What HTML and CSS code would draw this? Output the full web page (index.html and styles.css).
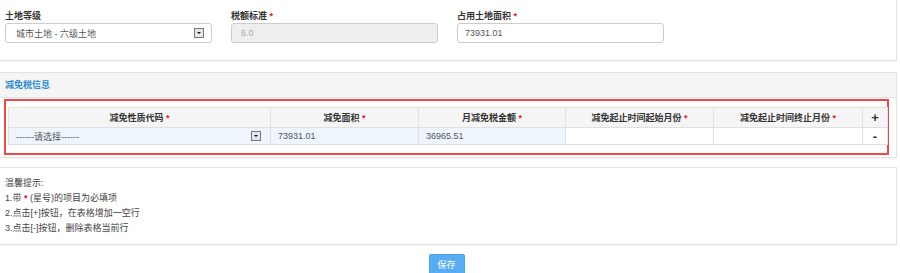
FILE: index.html
```html
<!DOCTYPE html>
<html lang="zh-CN">
<head>
<meta charset="UTF-8" />
<title>减免税信息</title>
<link rel="stylesheet" href="styles.css">
</head>
<body>

<div class="panel panel-top">
  <div class="form-row">
    <div class="field">
      <label>土地等级</label>
      <div class="select">
        <span>城市土地 - 六级土地</span>
        <span class="arrow"></span>
      </div>
    </div>
    <div class="field">
      <label>税额标准 <i class="req">*</i></label>
      <div class="input disabled">6.0</div>
    </div>
    <div class="field">
      <label>占用土地面积 <i class="req">*</i></label>
      <div class="input">73931.01</div>
    </div>
  </div>
</div>

<div class="panel panel-relief">
  <div class="panel-heading">减免税信息</div>
  <div class="panel-body">
    <div class="highlight">
      <table class="grid">
        <colgroup>
          <col style="width:262px"><col style="width:148px"><col style="width:147px">
          <col style="width:148px"><col style="width:149px"><col>
        </colgroup>
        <thead>
          <tr>
            <th>减免性质代码 <i class="req">*</i></th>
            <th>减免面积 <i class="req">*</i></th>
            <th>月减免税金额 <i class="req">*</i></th>
            <th>减免起止时间起始月份 <i class="req">*</i></th>
            <th>减免起止时间终止月份 <i class="req">*</i></th>
            <th class="op">+</th>
          </tr>
        </thead>
        <tbody>
          <tr>
            <td class="fill">
              <div class="cell-select">
                <span>------请选择------</span>
                <span class="arrow"></span>
              </div>
            </td>
            <td class="fill">73931.01</td>
            <td class="fill">36965.51</td>
            <td></td>
            <td></td>
            <td class="op">-</td>
          </tr>
        </tbody>
      </table>
    </div>
  </div>
</div>

<div class="panel panel-tips">
  <p>温馨提示:</p>
  <p>1.带 <i class="req">*</i> (星号)的项目为必填项</p>
  <p>2.点击[+]按钮，在表格增加一空行</p>
  <p>3.点击[-]按钮，删除表格当前行</p>
</div>

<div class="actions">
  <button class="btn-save">保存</button>
</div>

</body>
</html>
```

FILE: styles.css
```css
body {
  margin: 0;
  background: #fff;
  color: #333;
  font-family: "Liberation Sans", "Noto Sans CJK SC", sans-serif;
  font-size: 9px;
}
.req {
  color: #e4151b;
  font-style: normal;
  font-weight: bold;
}
.panel {
  margin-right: 3px;
  border: 1px solid #e3e3e3;
  border-left: 0;
  background: #fff;
  box-shadow: 0 1px 1px rgba(0, 0, 0, 0.04);
}
.panel-top {
  border-top: 0;
  padding: 10px 0 17px 5px;
}
.form-row {
  display: flex;
  gap: 19px;
}
.field {
  width: 207px;
}
.field label {
  display: block;
  height: 12px;
  line-height: 12px;
  margin-bottom: 1px;
  font-weight: bold;
  color: #333;
}
.select, .input {
  box-sizing: border-box;
  height: 20px;
  border: 1px solid #ccc;
  border-radius: 3px;
  display: flex;
  align-items: center;
  color: #555;
}
.select {
  padding: 0 7px 0 10px;
  justify-content: space-between;
}
.input {
  padding-left: 7px;
}
.input.disabled {
  background: #eee;
  color: #aaa;
  padding-left: 9px;
}
.arrow {
  box-sizing: border-box;
  width: 10px;
  height: 10px;
  border: 1px solid #777;
  background: #e6e6e6;
  position: relative;
}
.arrow::after {
  content: "";
  position: absolute;
  left: 2px;
  top: 3px;
  border-left: 2px solid transparent;
  border-right: 2px solid transparent;
  border-top: 2px solid #111;
}
.panel-relief {
  margin-top: 11px;
  padding: 0;
}
.panel-heading {
  height: 24px;
  line-height: 24px;
  padding-left: 5px;
  background: #f5f5f5;
  border-bottom: 1px solid #e3e3e3;
  color: #2a8bd2;
  font-weight: bold;
}
.panel-body {
  padding: 1px 0 2px 4px;
}
.highlight {
  width: 885px;
  border: 2px solid #f04848;
  padding: 6px 3px 8px 2px;
  box-sizing: border-box;
}
.grid {
  width: 880px;
  border-collapse: collapse;
  table-layout: fixed;
}
.grid th, .grid td {
  border: 1px solid #e0e0e0;
  padding: 0;
}
.grid th {
  height: 19px;
  background: #f5f5f5;
  font-weight: bold;
  text-align: center;
  color: #333;
}
.grid td {
  height: 16px;
  color: #555;
}
.grid td.fill {
  background: #eef5fc;
  padding-left: 7px;
}
.cell-select {
  display: flex;
  align-items: center;
  justify-content: space-between;
  padding-right: 9px;
}
.grid .op {
  text-align: center;
  font-size: 13px;
  font-weight: bold;
  color: #333;
}
.panel-tips {
  margin-top: 9px;
  padding: 8px 0 8px 5px;
  color: #444;
}
.panel-tips p {
  margin: 0;
  line-height: 15px;
}
.actions {
  margin-right: 7px;
  padding-top: 9px;
  text-align: center;
}
.btn-save {
  width: 36px;
  height: 21px;
  border: 1px solid #4aa3ee;
  border-radius: 2px;
  background: #58adf2;
  color: #fff;
  font-family: inherit;
  font-size: 9px;
  padding: 0;
}
```
